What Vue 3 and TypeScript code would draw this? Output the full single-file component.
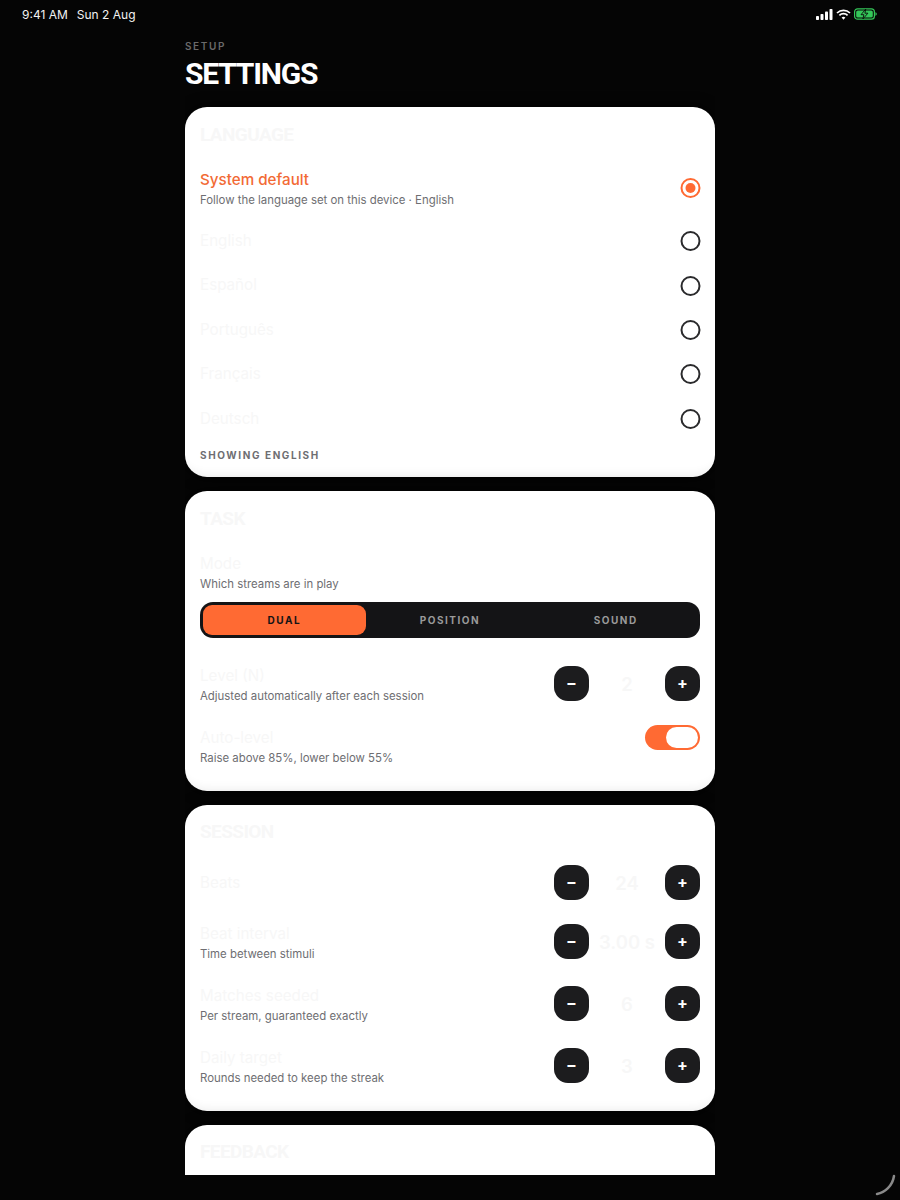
<script setup lang="ts">
const languages: string[] = ['English', 'Español', 'Português', 'Français', 'Deutsch']
const modes: string[] = ['DUAL', 'POSITION', 'SOUND']
interface StepRow { label: string; sub?: string; value: string }
const sessionRows: StepRow[] = [
  { label: 'Beats', value: '24' },
  { label: 'Beat interval', sub: 'Time between stimuli', value: '3.00 s' },
  { label: 'Matches seeded', sub: 'Per stream, guaranteed exactly', value: '6' },
  { label: 'Daily target', sub: 'Rounds needed to keep the streak', value: '3' },
]
</script>

<template>
  <div class="page">
    <header class="status">
      <div class="status-left"><span>9:41 AM</span><span>Sun 2 Aug</span></div>
      <div class="status-right">
        <svg width="17" height="11" viewBox="0 0 17 11"><rect x="0" y="7" width="3" height="4" rx=".8" fill="#fff"/><rect x="4.5" y="5" width="3" height="6" rx=".8" fill="#fff"/><rect x="9" y="2.5" width="3" height="8.5" rx=".8" fill="#fff"/><rect x="13.5" y="0" width="3" height="11" rx=".8" fill="#fff"/></svg>
        <svg width="15" height="11" viewBox="0 0 15 11" fill="none" stroke="#fff" stroke-width="1.7"><path d="M1 4a9.3 9.3 0 0 1 13 0"/><path d="M3.4 6.3a5.9 5.9 0 0 1 8.2 0"/><path d="M7.5 10.8 5.6 8.6a2.8 2.8 0 0 1 3.8 0Z" fill="#fff" stroke="none"/></svg>
        <svg width="23" height="12" viewBox="0 0 23 12"><rect x=".6" y=".8" width="19.8" height="10.4" rx="3" fill="none" stroke="#34c759" stroke-width="1.2"/><rect x="2.2" y="2.4" width="16.6" height="7.2" rx="1.6" fill="#34c759"/><path d="M21.4 4.2v3.6c.9-.3 1.4-1 1.4-1.8s-.5-1.5-1.4-1.8Z" fill="#34c759"/><path d="M11.8 1 7 6.7h2.9l-1 4.3 5-5.800h-3Z" fill="#34c759" stroke="#0a0a0a" stroke-width=".9"/></svg>
      </div>
    </header>

    <main class="column">
      <div class="eyebrow">SETUP</div>
      <h1 class="page-title">SETTINGS</h1>
      <div class="cards">
        <section class="card lang-card">
          <h2 class="card-title">LANGUAGE</h2>
          <div class="row row-center system-row">
            <div class="text">
              <div class="label accent">System default</div>
              <div class="sub">Follow the language set on this device · English</div>
            </div>
            <span class="radio on"><i></i></span>
          </div>
          <div v-for="l in languages" :key="l" class="row row-center lang-row">
            <div class="text"><div class="label">{{ l }}</div></div>
            <span class="radio"></span>
          </div>
          <div class="note">SHOWING ENGLISH</div>
        </section>

        <section class="card task-card">
          <h2 class="card-title">TASK</h2>
          <div class="mode-row">
            <div class="label">Mode</div>
            <div class="sub">Which streams are in play</div>
            <div class="segments">
              <button v-for="(m, i) in modes" :key="m" class="segment" :class="{ active: i === 0 }">{{ m }}</button>
            </div>
          </div>
          <div class="row level-row">
            <div class="text">
              <div class="label">Level (N)</div>
              <div class="sub">Adjusted automatically after each session</div>
            </div>
            <div class="stepper">
              <button class="step">−</button><span class="value">2</span><button class="step">+</button>
            </div>
          </div>
          <div class="row toggle-row">
            <div class="text">
              <div class="label">Auto-level</div>
              <div class="sub">Raise above 85%, lower below 55%</div>
            </div>
            <span class="toggle"><i></i></span>
          </div>
        </section>

        <section class="card session-card">
          <h2 class="card-title">SESSION</h2>
          <div v-for="r in sessionRows" :key="r.label" class="row" :class="{ 'row-center': !r.sub }">
            <div class="text">
              <div class="label">{{ r.label }}</div>
              <div v-if="r.sub" class="sub">{{ r.sub }}</div>
            </div>
            <div class="stepper">
              <button class="step">−</button><span class="value">{{ r.value }}</span><button class="step">+</button>
            </div>
          </div>
        </section>

        <section class="card feedback-card">
          <h2 class="card-title">FEEDBACK</h2>
        </section>
      </div>
    </main>

    <svg class="scroll-arc" width="24" height="24" viewBox="0 0 24 24" fill="none"><path d="M4 21C12 19.5 19.5 13 21 3" stroke="#8a8a8a" stroke-width="2.5" stroke-linecap="round"/></svg>
  </div>
</template>

<style>
html, body { margin: 0; background: #050505; }
</style>

<style scoped>
.page {
  position: relative;
  width: 900px;
  height: 1200px;
  background: #050505;
  overflow: hidden;
  font-family: Inter, "Liberation Sans", sans-serif;
  display: flex;
  flex-direction: column;
}
.status {
  height: 28px;
  flex: none;
  display: flex;
  justify-content: space-between;
  align-items: center;
  padding: 0 23px 0 22px;
  color: #f2f2f2;
  font-size: 12px;
}
.status-left { display: flex; gap: 9px; }
.status-right { display: flex; align-items: center; gap: 3px; }
.column {
  width: 530px;
  margin: 0 auto;
  height: 1147px;
  overflow: hidden;
  flex: none;
}
.eyebrow {
  margin-top: 12px;
  font-size: 10px;
  line-height: 13px;
  font-weight: 600;
  letter-spacing: 1.6px;
  color: #6a6a6a;
}
.page-title {
  margin: 3px 0 0;
  font-family: Roboto, "Liberation Sans", sans-serif;
  font-size: 30px;
  line-height: 36px;
  font-weight: 700;
  color: #fff;
  letter-spacing: -1.2px;
  height: 36px;
}
.cards {
  margin-top: 15px;
  display: flex;
  flex-direction: column;
  gap: 14px;
}
.card {
  flex: none;
  background: #fff;
  border-radius: 22px;
  padding: 17px 15px 0;
  box-sizing: border-box;
  box-shadow: 0 0 14px #000, inset 0 -14px 12px -14px rgba(0, 0, 0, .09);
}
.lang-card { height: 370px; }
.task-card { height: 300px; }
.session-card { height: 306px; }
.feedback-card { height: 320px; }
.card-title {
  margin: 0;
  height: 31px;
  font-family: Roboto, "Liberation Sans", sans-serif;
  font-size: 19px;
  line-height: 22px;
  font-weight: 700;
  letter-spacing: -.6px;
  color: #f7f7f7;
}
.session-card .card-title, .feedback-card .card-title { line-height: 20px; }
.row {
  display: flex;
  justify-content: space-between;
  align-items: flex-start;
  padding: 12px 0;
}
.row-center { align-items: center; }
.system-row { margin-top: 3px; padding-bottom: 11px; }
.system-row .radio { margin-top: -2px; }
.label {
  font-size: 15.2px;
  line-height: 20px;
  color: #f7f7f7;
}
.lang-row .label { line-height: 20.4px; }
.label.accent { color: #f26a35; font-weight: 500; }
.sub {
  margin: 3px 0 0;
  font-size: 11.4px;
  line-height: 15px;
  color: #6e6e72;
}
.radio {
  width: 20px;
  height: 20px;
  box-sizing: border-box;
  border: 2px solid #2a2a2c;
  border-radius: 50%;
  display: flex;
  align-items: center;
  justify-content: center;
  flex: none;
  transform: translateX(.5px);
}
.radio.on { border-color: #ff6a33; }
.radio i {
  width: 10px;
  height: 10px;
  border-radius: 50%;
  background: #ff6a33;
}
.note {
  margin-top: 7px;
  font-size: 10px;
  line-height: 14px;
  font-weight: 700;
  letter-spacing: 1.6px;
  color: #6e6e72;
}
.mode-row { padding: 15px 0 0; }
.segments {
  margin-top: 10px;
  height: 36px;
  background: #141416;
  border-radius: 13px;
  padding: 3px;
  box-sizing: border-box;
  display: grid;
  grid-template-columns: repeat(3, 1fr);
  gap: 3px;
}
.segment {
  border: 0;
  background: transparent;
  border-radius: 9px;
  font-family: inherit;
  font-size: 10px;
  font-weight: 700;
  letter-spacing: 1.5px;
  color: #9a9a9a;
  padding: 0;
}
.segment.active { background: #ff6a33; color: #141416; }
.level-row { margin-top: 16px; }
.toggle-row { padding-top: 9px; }
.toggle-row .text { padding-top: 3px; }
.toggle {
  width: 55px;
  height: 25px;
  box-sizing: border-box;
  border-radius: 13px;
  background: #ff6a33;
  padding: 2px;
  display: flex;
  justify-content: flex-end;
  flex: none;
}
.toggle i {
  width: 32px;
  height: 21px;
  border-radius: 11px;
  background: #fff;
}
.stepper {
  display: flex;
  align-items: center;
  width: 146px;
  flex: none;
}
.step {
  width: 35px;
  height: 35px;
  border: 0;
  padding: 0;
  flex: none;
  border-radius: 14px;
  background: #1c1c1e;
  color: #fff;
  font-family: inherit;
  font-size: 16px;
  font-weight: 700;
  line-height: 35px;
}
.value {
  flex: 1;
  text-align: center;
  font-size: 18.5px;
  font-weight: 600;
  color: #f7f7f7;
  white-space: nowrap;
}
.scroll-arc {
  position: absolute;
  right: 3px;
  bottom: 3px;
}
</style>
